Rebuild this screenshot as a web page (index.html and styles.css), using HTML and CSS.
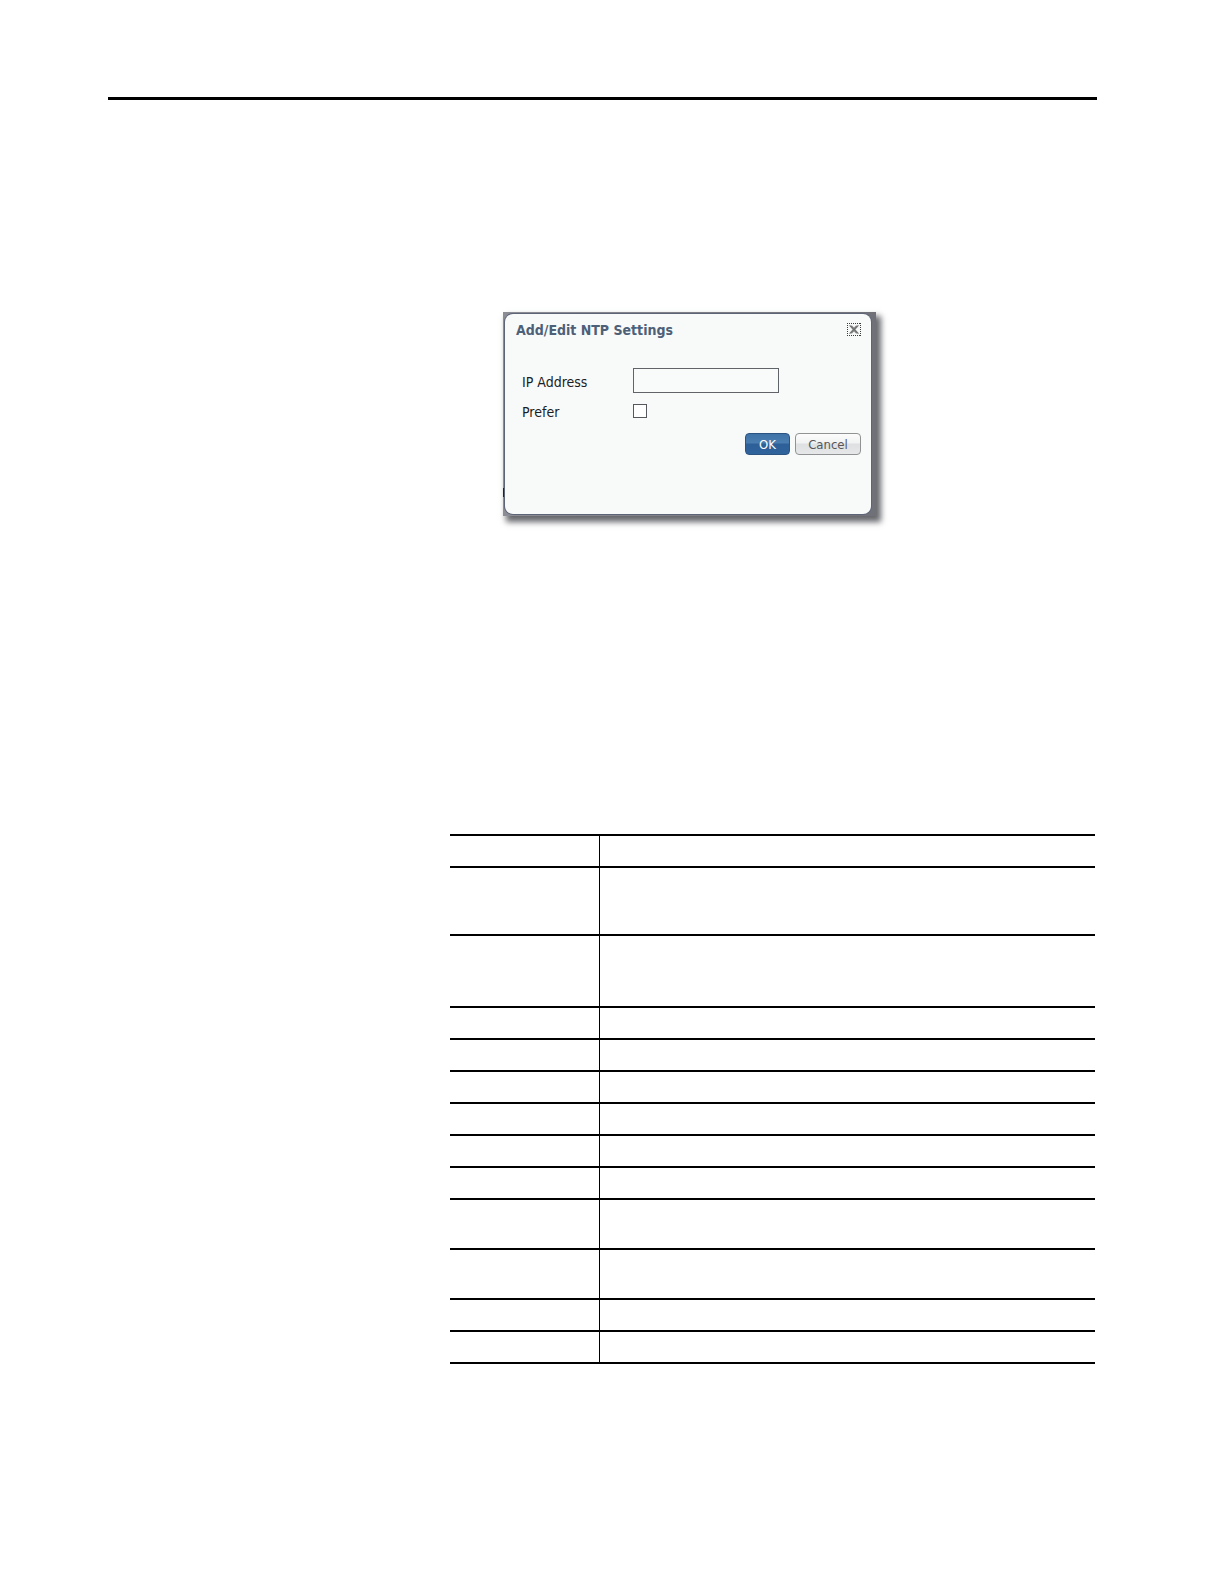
FILE: index.html
```
<!DOCTYPE html>
<html lang="en">
<head>
    <meta charset="UTF-8">
    <meta name="viewport" content="width=device-width, initial-scale=1.0">
    <title>Add/Edit NTP Settings</title>
    <link rel="stylesheet" href="styles.css">
</head>
<body>
    <div class="page">
        <hr class="page-rule">

        <main class="content">
            <div class="dialog-frame">
                <form class="dialog">
                    <div class="dialog-header">
                        <h1>Add/Edit NTP Settings</h1>
                        <button type="button" class="close-btn" aria-label="Close">
                            <svg width="14" height="14" viewBox="0 0 14 14">
                                <path d="M0 .5h14M0 12.500h14M.5 0v13M13.500 0v13" fill="none" stroke="#3c3c3c" stroke-dasharray="1 1"/>
                                <path d="M2 2.500h3l2 2 2-2h3L8.500 6.500l3.500 4H9l-2-2-2 2H2l3.500-4z" fill="#8a8a8a"/>
                                <path d="M3 2.500l8 8M11 2.500l-8 8" stroke="#666"/>
                            </svg>
                        </button>
                    </div>

                    <div class="fields">
                        <label for="ip-address">IP Address</label>
                        <input type="text" id="ip-address" class="text-input">
                        <label for="prefer">Prefer</label>
                        <input type="checkbox" id="prefer" class="check-input">
                    </div>

                    <div class="button-group">
                        <button type="submit" class="ok-btn">OK</button>
                        <button type="button" class="cancel-btn">Cancel</button>
                    </div>
                </form>
                <span class="edge-mark"></span>
            </div>

            <table class="field-table">
                <tbody>
                    <tr><td class="name-cell"></td><td></td></tr>
                    <tr class="row-three"><td></td><td></td></tr>
                    <tr class="row-list"><td></td><td></td></tr>
                    <tr><td></td><td></td></tr>
                    <tr><td></td><td></td></tr>
                    <tr><td></td><td></td></tr>
                    <tr><td></td><td></td></tr>
                    <tr><td></td><td></td></tr>
                    <tr><td></td><td></td></tr>
                    <tr class="row-two"><td></td><td></td></tr>
                    <tr class="row-two"><td></td><td></td></tr>
                    <tr><td></td><td></td></tr>
                    <tr><td></td><td></td></tr>
                </tbody>
            </table>
        </main>
    </div>
</body>
</html>
```
FILE: styles.css
```
* {
    box-sizing: border-box;
}

body {
    margin: 0;
    background: #fff;
    color: #1c1c24;
    font-family: "DejaVu Sans Condensed", "DejaVu Sans", sans-serif;
    font-size: 14px;
}

.page {
    padding: 97px 127px 220px 108px;
}

.page-rule {
    height: 3px;
    margin: 0;
    border: none;
    background: #000;
}

.content {
    margin: 212px 2px 0 342px;
}

/* dialog */
.dialog-frame {
    position: relative;
    width: 373px;
    margin-left: 53px;
    padding: 2px 5px 2px 2px;
    background: linear-gradient(90deg, #8c8c94, #707078);
    box-shadow: 4px 5px 6px 1px #66676c;
}

.dialog {
    height: 200px;
    padding: 7px 10px 0 11px;
    border-radius: 8px;
    background: #f8faf9;
    box-shadow: 0 0 0 1px #5d6478;
}

.dialog-header {
    display: flex;
    justify-content: space-between;
    align-items: center;
    height: 18px;
}

h1 {
    margin: 0;
    color: #4d6078;
    font-size: 14px;
    font-weight: bold;
}

.close-btn {
    width: 14px;
    height: 14px;
    padding: 0;
    border: none;
    background: none;
}

.close-btn svg {
    display: block;
}

.fields {
    display: grid;
    grid-template-columns: 111px 1fr;
    row-gap: 9px;
    align-items: center;
    margin-top: 29px;
    padding-left: 6px;
}

.fields label {
    padding-top: 2px;
}

.text-input {
    width: 146px;
    height: 25px;
    padding: 2px 4px;
    border: 1px solid #606468;
    background: #f9fbfb;
    font: inherit;
}

.check-input {
    appearance: none;
    width: 14px;
    height: 14px;
    margin: 0;
    border: 1px solid #55595d;
    background: #fff;
}

.check-input:checked {
    background: #3a6fa8;
}

.button-group {
    display: flex;
    justify-content: flex-end;
    gap: 5px;
    margin-top: 13px;
}

.ok-btn,
.cancel-btn {
    height: 22px;
    padding: 0;
    border-radius: 4px;
    font-family: inherit;
    font-size: 13px;
}

.ok-btn {
    width: 45px;
    border: 1px solid #2c5482;
    background: linear-gradient(#3f73a8 0%, #4a7db0 45%, #2d5f98 50%, #2f639c 100%);
    color: #fff;
}

.cancel-btn {
    width: 66px;
    border: 1px solid #909294;
    background: linear-gradient(#fcfcfc 0%, #f1f2f2 45%, #dfe0e1 50%, #e6e7e8 100%);
    color: #55575c;
}

.edge-mark {
    position: absolute;
    left: 0;
    top: 176px;
    width: 1px;
    height: 9px;
    background: #22222c;
}

/* ruled table */
.field-table {
    width: 100%;
    margin-top: 318px;
    border-collapse: separate;
    border-spacing: 0;
    border-top: 2px solid #000;
    table-layout: fixed;
}

.field-table td {
    height: 32px;
    padding: 0;
    border-bottom: 2px solid #000;
}

.field-table td:first-child {
    border-right: 1px solid #000;
}

.name-cell {
    width: 150px;
}

.field-table .row-two td {
    height: 50px;
}

.field-table .row-three td {
    height: 68px;
}

.field-table .row-list td {
    height: 72px;
}
```
